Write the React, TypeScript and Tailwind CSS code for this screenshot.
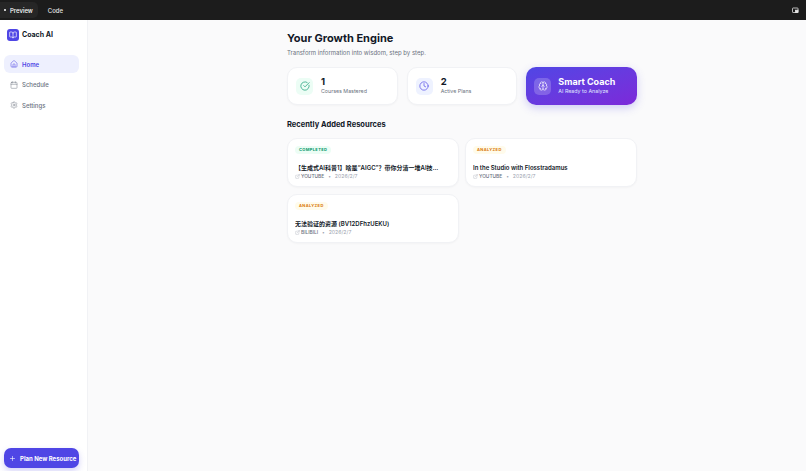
import { Home, Calendar, Settings, CircleCheckBig, Clock, Brain, Plus, ExternalLink, BookOpen } from "lucide-react";
import type { ReactNode } from "react";

const sans = "font-['Inter','Noto_Sans_CJK_SC',sans-serif]";

function NavItem({ icon, label, active }: { icon: ReactNode; label: string; active?: boolean }) {
  return (
    <div className={`flex h-[18px] items-center gap-[4px] rounded-[6px] pl-[6px] ${active ? "bg-[#eef0fe] text-[#4f46e5]" : "text-[#6b7280]"}`}>
      {icon}
      <span className={`text-[6px] leading-[9px] ${active ? "font-semibold" : "font-medium"}`}>{label}</span>
    </div>
  );
}

function Stat({ icon, bg, value, label }: { icon: ReactNode; bg: string; value: string; label: string }) {
  return (
    <div className="flex h-[38px] items-center gap-[8px] rounded-[10px] border border-[#f1f2f5] bg-white pl-[8px] shadow-[0_1px_2px_rgba(0,0,0,0.03)]">
      <div className={`flex h-[17px] w-[17px] items-center justify-center rounded-[5px] ${bg}`}>{icon}</div>
      <div className="flex flex-col">
        <span className="text-[9.5px] leading-[10px] font-bold text-[#111827]">{value}</span>
        <span className="text-[5.3px] leading-[8px] text-[#6b7280]">{label}</span>
      </div>
    </div>
  );
}

function Card({ status, title, source, date }: { status: "COMPLETED" | "ANALYZED"; title: string; source: string; date: string }) {
  const c = status === "COMPLETED" ? "bg-[#ecfdf5] text-[#059669]" : "bg-[#fffbeb] text-[#d97706]";
  return (
    <div className="flex h-[49px] flex-col items-start rounded-[10px] border border-[#f1f2f5] bg-white pl-[7px] pt-[7px] shadow-[0_1px_2px_rgba(0,0,0,0.03)]">
      <span className={`flex h-[8px] items-center rounded-full px-[4px] text-[4px] font-bold tracking-[0.35px] ${c}`}>{status}</span>
      <span className="mt-[9px] w-[145px] truncate text-[6px] leading-[9px] font-semibold text-[#111827]">{title}</span>
      <div className="mt-[1px] flex items-center text-[4.8px] leading-[7px] text-[#9ca3af]">
        <ExternalLink size={5} strokeWidth={1.5} className="mr-[1px]" />
        <span className="font-medium text-[#6b7280]">{source}</span>
        <span className="mx-[4px]">•</span>
        <span className="text-[5.2px]">{date}</span>
      </div>
    </div>
  );
}

export default function App() {
  return (
    <div className={`flex h-[471px] w-[806px] flex-col overflow-hidden bg-[#fafafb] ${sans}`}>
      <div className="flex h-[20px] shrink-0 items-center justify-between bg-[#1c1c1c] pr-[7px] text-[6px] font-medium text-white">
        <div className="flex h-full items-center">
          <div className="flex h-[16px] items-center gap-[4px] rounded-r-[5px] bg-[#262626] pl-[4px] pr-[5px]">
            <span className="h-[2px] w-[2px] rounded-full bg-white" />
            <span>Preview</span>
          </div>
          <span className="ml-[10px] text-[#e5e5e5]">Code</span>
        </div>
        <svg width="7" height="7" viewBox="0 0 7 7" fill="none" stroke="#e5e5e5" strokeWidth="0.8">
          <rect x="0.5" y="1" width="5.5" height="4.5" rx="0.6" />
          <rect x="3.5" y="3.2" width="2.5" height="2.3" fill="#e5e5e5" />
        </svg>
      </div>
      <div className="flex min-h-0 flex-1">
        <aside className="flex w-[88px] shrink-0 flex-col border-r border-[#f1f2f5] bg-white pb-[3px] pl-[4px] pr-[8px]">
          <div className="mt-[9px] flex items-center gap-[3px] pl-[3px]">
            <div className="flex h-[12px] w-[12px] items-center justify-center rounded-[3px] bg-[#4f46e5]">
              <BookOpen size={8} color="white" strokeWidth={2} />
            </div>
            <span className="text-[7px] leading-[12px] font-bold text-[#111827]">Coach AI</span>
          </div>
          <div className="mt-[14px] flex flex-col gap-[2.5px]">
            <NavItem active icon={<Home size={8} strokeWidth={1.6} />} label="Home" />
            <NavItem icon={<Calendar size={8} strokeWidth={1.4} />} label="Schedule" />
            <NavItem icon={<Settings size={8} strokeWidth={1.4} />} label="Settings" />
          </div>
          <div className="mt-auto flex h-[20px] w-[75px] items-center gap-[4px] rounded-[7px] bg-[#4f46e5] pl-[5px] text-white shadow-[0_3px_6px_rgba(79,70,229,0.25)]">
            <Plus size={7} strokeWidth={2} className="shrink-0" />
            <span className="whitespace-nowrap text-[6px] font-bold">Plan New Resource</span>
          </div>
        </aside>
        <main className="ml-[199px] w-[350px] pt-[11px]">
          <h1 className="text-[11px] leading-[15px] font-bold text-[#111827]">Your Growth Engine</h1>
          <p className="mt-[2px] text-[6px] leading-[9px] text-[#6b7280]">Transform information into wisdom, step by step.</p>
          <div className="mt-[10px] grid grid-cols-3 gap-[9px]">
            <Stat bg="bg-[#ecfdf5]" icon={<CircleCheckBig size={10} color="#059669" strokeWidth={1.6} />} value="1" label="Courses Mastered" />
            <Stat bg="bg-[#eef2ff]" icon={<Clock size={10} color="#4f46e5" strokeWidth={1.6} />} value="2" label="Active Plans" />
            <div className="flex h-[38px] items-center gap-[7px] rounded-[10px] bg-gradient-to-br from-[#4f46e5] to-[#7c28d9] pl-[8px] text-white shadow-[0_3px_8px_rgba(79,70,229,0.25)]">
              <div className="flex h-[17px] w-[17px] items-center justify-center rounded-[5px] bg-white/20">
                <Brain size={10} strokeWidth={1.5} />
              </div>
              <div className="flex flex-col">
                <span className="text-[9px] leading-[10px] font-bold">Smart Coach</span>
                <span className="text-[5.3px] leading-[8px] text-[#e0e7ff]">AI Ready to Analyze</span>
              </div>
            </div>
          </div>
          <h2 className="mt-[14px] text-[7.5px] leading-[12px] font-bold text-[#111827]">Recently Added Resources</h2>
          <div className="mt-[7px] grid grid-cols-[172px_172px] gap-x-[6px] gap-y-[7px]">
            <Card status="COMPLETED" title="【生成式AI科普1】啥是“AIGC”？带你分清一堆AI技术名词和概念" source="YOUTUBE" date="2026/2/7" />
            <Card status="ANALYZED" title="In the Studio with Flosstradamus" source="YOUTUBE" date="2026/2/7" />
            <Card status="ANALYZED" title="无法验证的资源 (BV12DFhzUEKU)" source="BILIBILI" date="2026/2/7" />
          </div>
        </main>
      </div>
    </div>
  );
}
